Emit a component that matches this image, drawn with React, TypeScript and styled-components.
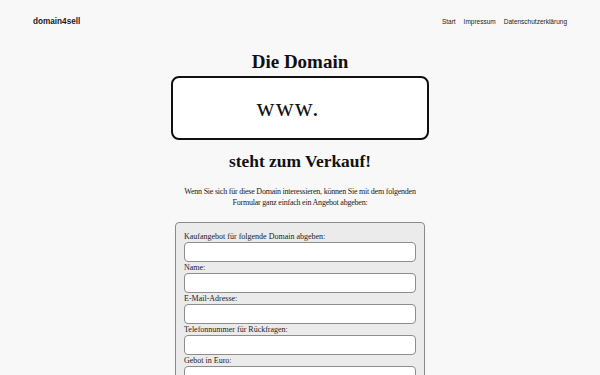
import React from "react";
import styled, { createGlobalStyle } from "styled-components";

const GlobalStyle = createGlobalStyle`
    html, body {
        margin: 0;
        padding: 0;
        background: #f8f8f8;
    }

    body {
        font-family: "Liberation Serif", "Times New Roman", serif;
        color: #111;
    }
`;

const Header = styled.header`
    height: 42px;
    padding: 0 33px;
    display: flex;
    align-items: center;
    justify-content: space-between;
    font-family: "Liberation Sans", Arial, sans-serif;
`;

const Logo = styled.a`
    font-size: 8.2px;
    font-weight: 700;
    color: #1a1a1a;
    text-decoration: none;
`;

const Nav = styled.nav`
    display: flex;
    gap: 8px;

    a {
        font-size: 6.5px;
        font-weight: 500;
        color: #1a1a1a;
        text-decoration: none;
    }
`;

const Main = styled.main`
    display: flex;
    flex-direction: column;
    align-items: center;
`;

const Title = styled.h1`
    margin: 7px 0 0;
    font-size: 19px;
    line-height: 26px;
    font-weight: 700;
`;

const DomainBox = styled.div`
    box-sizing: border-box;
    width: 258px;
    height: 64px;
    margin-top: 1px;
    border: 2px solid #111;
    border-radius: 8px;
    background: #fff;
    display: flex;
    align-items: center;
    justify-content: center;
    padding-right: 24px;
    font-size: 25px;
    letter-spacing: 1px;
`;

const SubTitle = styled.h2`
    margin: 8px 0 0;
    font-size: 17.4px;
    line-height: 26px;
    font-weight: 700;
`;

const Intro = styled.p`
    margin: 12px 0 0;
    font-size: 8px;
    line-height: 11px;
    letter-spacing: -0.22px;
    text-align: center;
    color: #222;
`;

const OfferForm = styled.form`
    box-sizing: border-box;
    width: 250px;
    margin-top: 14px;
    padding: 8px;
    background: #ebebeb;
    border: 1px solid #8a8a8a;
    border-radius: 4px;
    display: flex;
    flex-direction: column;
`;

const Label = styled.label`
    display: block;
    font-size: 8px;
    line-height: 11px;
    color: #222;
`;

const Input = styled.input`
    box-sizing: border-box;
    display: block;
    width: 100%;
    height: 20px;
    margin: 0;
    background: #fff;
    border: 1px solid #8d8d8d;
    border-radius: 4px;
`;

const fields = [
    { id: "domain", label: "Kaufangebot für folgende Domain abgeben:" },
    { id: "name", label: "Name:" },
    { id: "email", label: "E-Mail-Adresse:" },
    { id: "phone", label: "Telefonnummer für Rückfragen:" },
    { id: "offer", label: "Gebot in Euro:" },
];

export default function App() {
    return (
        <>
            <GlobalStyle />
            <Header>
                <Logo href="#">domain4sell</Logo>
                <Nav>
                    <a href="#">Start</a>
                    <a href="#">Impressum</a>
                    <a href="#">Datenschutzerklärung</a>
                </Nav>
            </Header>
            <Main>
                <Title>Die Domain</Title>
                <DomainBox>www.</DomainBox>
                <SubTitle>steht zum Verkauf!</SubTitle>
                <Intro>
                    Wenn Sie sich für diese Domain interessieren, können Sie mit dem folgenden
                    <br />
                    Formular ganz einfach ein Angebot abgeben:
                </Intro>
                <OfferForm onSubmit={(e) => e.preventDefault()}>
                    {fields.map((f) => (
                        <div key={f.id}>
                            <Label htmlFor={f.id}>{f.label}</Label>
                            <Input id={f.id} name={f.id} type="text" />
                        </div>
                    ))}
                </OfferForm>
            </Main>
        </>
    );
}
